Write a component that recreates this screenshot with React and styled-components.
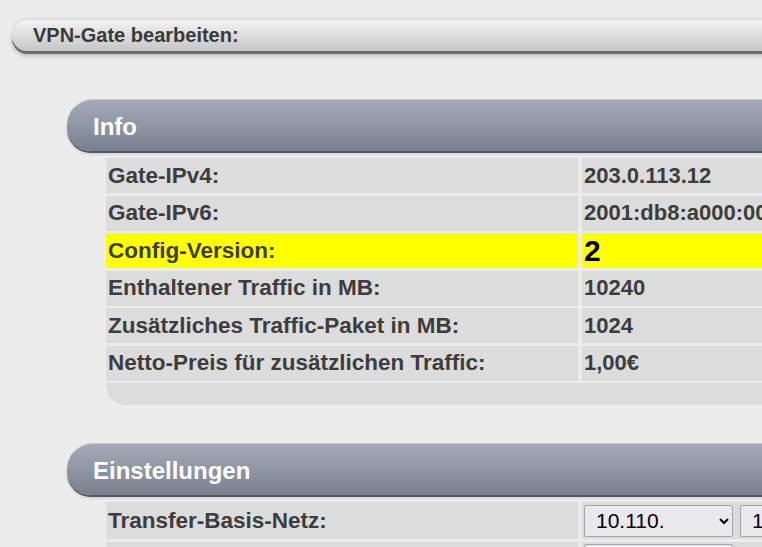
import React from 'react'
import styled, { createGlobalStyle } from 'styled-components'

const GlobalStyle = createGlobalStyle`
  body {
    margin: 0;
    background: #ececec;
    font-family: 'Liberation Sans', Arial, sans-serif;
    overflow: hidden;
  }
`

const Page = styled.div`
  width: 1200px;
  padding: 20px 0 0 12px;
`

const TitleBar = styled.div`
  display: flex;
  align-items: center;
  height: 31px;
  padding-left: 21px;
  border-radius: 16px 0 0 16px;
  background: linear-gradient(#f3f3f3, #c6c6c6);
  box-shadow: 0 3px 0 #6b6b6b, 0 5px 5px rgba(0, 0, 0, 0.2),
    0 -2px 3px rgba(0, 0, 0, 0.08);
  color: #3a3a3a;
  font-size: 20px;
  font-weight: bold;
  line-height: 1;
  padding-bottom: 2px;
  box-sizing: border-box;
`

const Section = styled.section`
  margin: ${(props) => props.top}px 0 0 55px;
`

const SectionHeader = styled.h2`
  display: flex;
  align-items: center;
  height: 52px;
  margin: 0;
  padding: 3px 0 0 26px;
  border-radius: 26px 0 0 24px;
  border-top: 1px solid #c3c7ce;
  box-sizing: border-box;
  background: linear-gradient(#a4abb7, #79808f);
  box-shadow: 0 2px 0 #545961, 0 3px 3px rgba(0, 0, 0, 0.15);
  color: #fff;
  font-size: 24px;
  font-weight: bold;
`

const Grid = styled.div`
  display: grid;
  grid-template-columns: 472px 1fr;
  column-gap: 4px;
  row-gap: 2.5px;
  margin: 7px 0 0 39px;
`

const Cell = styled.div`
  display: flex;
  align-items: ${(props) => (props.top ? 'flex-start' : 'center')};
  height: ${(props) => props.h || 35}px;
  padding: ${(props) => (props.top ? '2px 0 0 2px' : '0 0 0 2px')};
  box-sizing: border-box;
  background: ${(props) => (props.highlight ? '#ffff00' : '#dcdcdc')};
  color: ${(props) => (props.big ? '#000' : '#3d3d3d')};
  font-size: ${(props) => (props.big ? 30 : props.label ? 22.5 : 22)}px;
  font-weight: bold;
  white-space: nowrap;
  overflow: hidden;
`

const Footer = styled.div`
  height: 22px;
  margin: 2.5px 0 0 39px;
  background: #dcdcdc;
  border-bottom-left-radius: 20px;
`

const Select = styled.select`
  width: 149px;
  height: 32px;
  margin-right: 7px;
  padding-left: 7px;
  border: 1px solid #a6a6a6;
  border-radius: 2px;
  background-color: #e9e9ed;
  color: #000;
  font-family: 'Liberation Sans', Arial, sans-serif;
  font-size: 21px;
`

const infoRows = [
  ['Gate-IPv4:', '203.0.113.12'],
  ['Gate-IPv6:', '2001:db8:a000:0000::1'],
  ['Config-Version:', '2', true],
  ['Enthaltener Traffic in MB:', '10240'],
  ['Zusätzliches Traffic-Paket in MB:', '1024'],
  ['Netto-Preis für zusätzlichen Traffic:', '1,00€'],
]

export default function App() {
  return (
    <Page>
      <GlobalStyle />
      <TitleBar>VPN-Gate bearbeiten:</TitleBar>

      <Section top={48}>
        <SectionHeader>Info</SectionHeader>
        <Grid>
          {infoRows.map(([label, value, mark]) => (
            <React.Fragment key={label}>
              <Cell label highlight={mark}>
                {label}
              </Cell>
              <Cell highlight={mark} big={mark}>
                {value}
              </Cell>
            </React.Fragment>
          ))}
        </Grid>
        <Footer />
      </Section>

      <Section top={38}>
        <SectionHeader>Einstellungen</SectionHeader>
        <Grid>
          <Cell label h={37}>
            Transfer-Basis-Netz:
          </Cell>
          <Cell h={37}>
            <Select defaultValue='10.110.'>
              <option>10.110.</option>
            </Select>
            <Select defaultValue='100'>
              <option>100</option>
            </Select>
          </Cell>
          <Cell label h={80} />
          <Cell h={80} top>
            <Select defaultValue='0'>
              <option>0</option>
            </Select>
          </Cell>
        </Grid>
      </Section>
    </Page>
  )
}
